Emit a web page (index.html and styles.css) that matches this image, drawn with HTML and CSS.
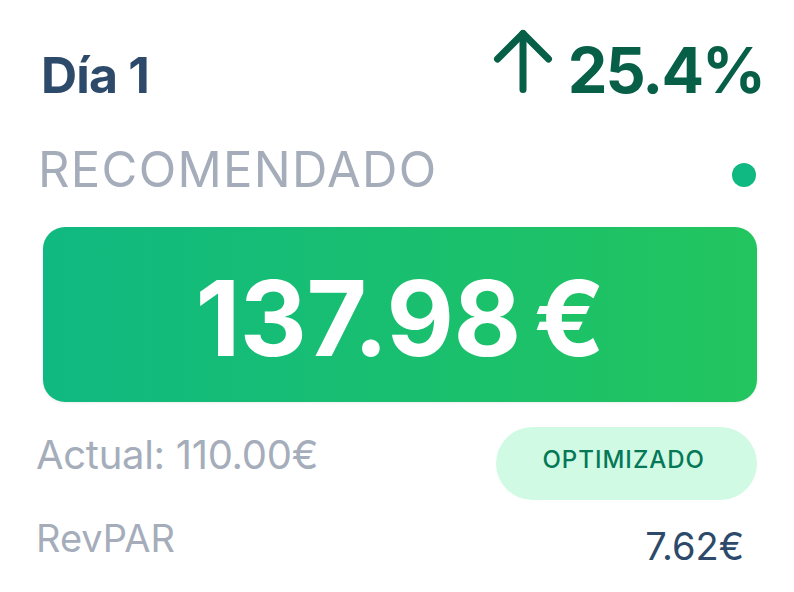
FILE: index.html
```html
<!DOCTYPE html>
<html lang="es">
<head>
    <meta charset="UTF-8">
    <meta name="viewport" content="width=device-width, initial-scale=1.0">
    <title>Día 1 - Precio recomendado</title>
    <link rel="stylesheet" href="styles.css">
</head>
<body>

    <div class="card">
        <div class="head">
            <h1 class="day">Día 1</h1>
            <div class="trend">
                <svg class="trend-icon" width="60" height="64" viewBox="0 0 60 64" fill="none" stroke="currentColor" stroke-width="7" stroke-linecap="round" stroke-linejoin="round">
                    <path d="M30 4.5 V60.5"></path>
                    <path d="M4.5 30 L30 4.5 L55.5 30"></path>
                </svg>
                <span class="trend-value">25.4%</span>
            </div>
        </div>

        <div class="label-row">
            <span class="label">RECOMENDADO</span>
            <span class="dot"></span>
        </div>

        <div class="price-box">137.98 €</div>

        <div class="current-row">
            <span class="current">Actual: 110.00€</span>
            <span class="badge">OPTIMIZADO</span>
        </div>

        <div class="revpar-row">
            <span class="revpar-label">RevPAR</span>
            <span class="revpar-value">7.62€</span>
        </div>
    </div>

</body>
</html>
```

FILE: styles.css
```css
/* General Styles */
body {
    margin: 0;
    padding: 0;
    background: #ffffff;
    font-family: Inter, 'Noto Sans', sans-serif;
}

.card {
    padding: 29px 36px 0 38px;
}

/* Header */
.head {
    display: flex;
    justify-content: space-between;
    align-items: baseline;
    margin-right: -6px;
    line-height: 1;
}

.day {
    margin: 0 0 0 3px;
    font-size: 50px;
    font-weight: 700;
    letter-spacing: -0.8px;
    color: #2d4a6a;
}

.trend {
    display: flex;
    align-items: baseline;
    gap: 15px;
    color: #065f46;
}

.trend-icon {
    display: block;
}

.trend-value {
    font-size: 63px;
    font-weight: 700;
    letter-spacing: -2px;
}

/* Recommended label */
.label-row {
    display: flex;
    justify-content: space-between;
    align-items: baseline;
    margin-top: 43px;
    line-height: 1;
}

.label {
    font-size: 49px;
    letter-spacing: 1.3px;
    color: #a5adbb;
}

.dot {
    display: inline-block;
    width: 24px;
    height: 24px;
    margin-right: 2px;
    border-radius: 50%;
    background-color: #10b981;
}

/* Price box */
.price-box {
    margin: 33px 1px 0 5px;
    padding: 39px 0 32px;
    border-radius: 22px;
    background: linear-gradient(90deg, #10b981, #22c55e);
    box-shadow: 0 1px 3px rgba(0, 0, 0, 0.08);
    color: #ffffff;
    font-size: 104px;
    font-weight: 700;
    line-height: 1;
    letter-spacing: -0.5px;
    word-spacing: -11px;
    text-align: center;
}

/* Current price and badge */
.current-row {
    display: flex;
    justify-content: space-between;
    align-items: flex-start;
    margin-top: 25px;
    line-height: 1;
}

.current {
    margin-top: 8px;
    margin-left: -2px;
    font-size: 40px;
    letter-spacing: -0.3px;
    color: #a5adbb;
}

.badge {
    margin-right: 1px;
    padding: 21px 52px 28px 46px;
    border-radius: 40px;
    background-color: #d1fae5;
    color: #047857;
    font-size: 24px;
    font-weight: 500;
    letter-spacing: 1px;
}

/* RevPAR */
.revpar-row {
    display: flex;
    justify-content: space-between;
    align-items: flex-start;
    margin-top: 19px;
    line-height: 1;
}

.revpar-label {
    margin-left: -2px;
    font-size: 38px;
    color: #a5adbb;
}

.revpar-value {
    margin-top: 8px;
    margin-right: 14px;
    font-size: 38px;
    color: #2d4a6a;
}
```
